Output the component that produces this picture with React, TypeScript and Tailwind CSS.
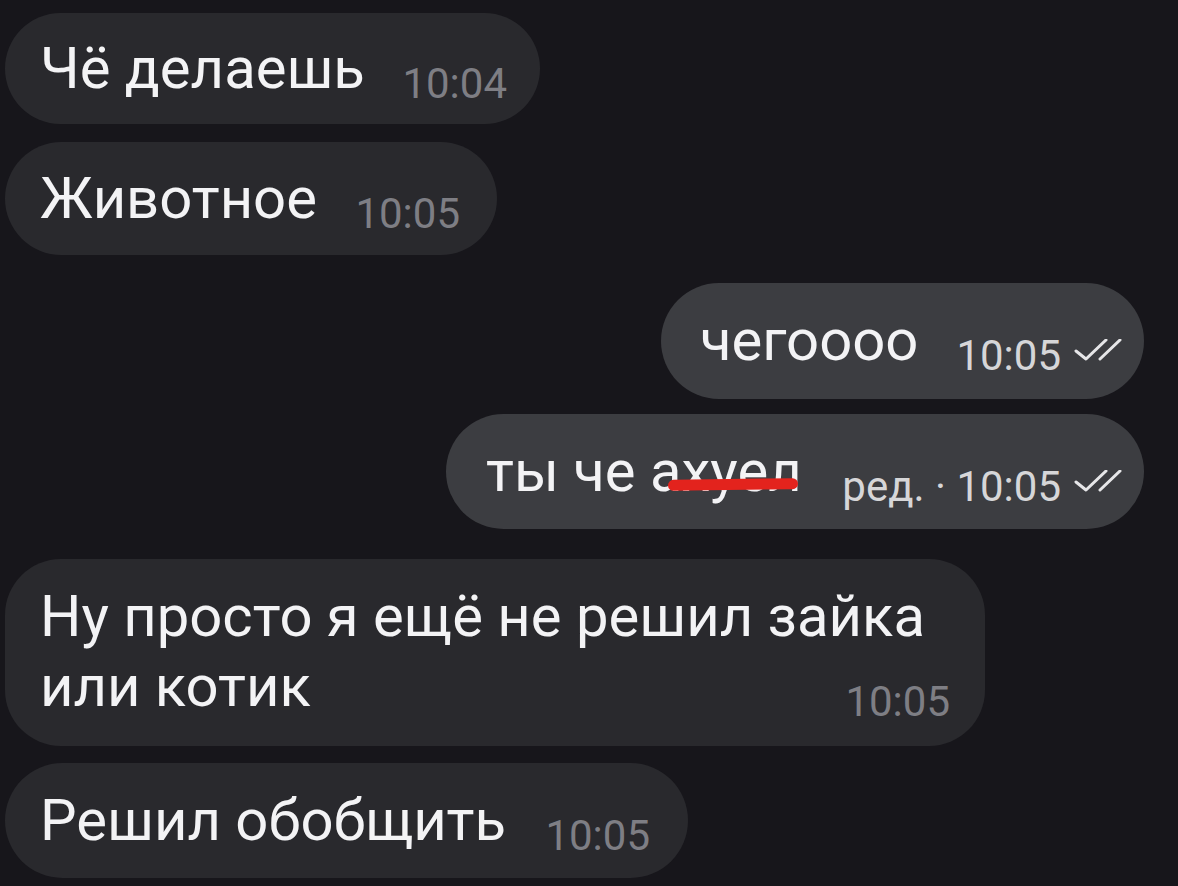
import React from "react";

function Checks() {
  return (
    <svg
      width="48"
      height="24"
      viewBox="0 0 48 24"
      fill="none"
      stroke="#e6e6e8"
      strokeWidth="3"
      strokeLinecap="round"
      strokeLinejoin="round"
      className="ml-[13px] shrink-0 translate-y-[3px]"
    >
      <path d="M2 12 L12 20 L32 1" />
      <path d="M26 20 L46 1" />
    </svg>
  );
}

function InTime({ t }: { t: string }) {
  return (
    <span className="translate-y-[10px] text-[42px] leading-none text-[#7e7e84]">
      {t}
    </span>
  );
}

export default function App() {
  return (
    <div className="flex h-[886px] w-full flex-col overflow-hidden whitespace-nowrap bg-[#17161b] pt-[13px] font-['Roboto','Liberation_Sans',sans-serif] text-[58px] leading-[70px] text-[#f3f3f5]">
      {/* Чё делаешь */}
      <div className="ml-[5px] flex w-[535px] items-baseline justify-between rounded-full bg-[#29292d] pb-[21px] pl-[35px] pr-[33px] pt-[20px]">
        <span>Чё делаешь</span>
        <InTime t="10:04" />
      </div>

      {/* Животное */}
      <div className="ml-[5px] mt-[18px] flex w-[492px] items-baseline justify-between rounded-full bg-[#29292d] pb-[22px] pl-[35px] pr-[37px] pt-[21px]">
        <span>Животное</span>
        <InTime t="10:05" />
      </div>

      {/* чегоооо */}
      <div className="mr-[34px] mt-[28px] flex w-[483px] items-baseline self-end rounded-full bg-[#3c3d41] pb-[24px] pl-[39px] pr-[22px] pt-[22px]">
        <span>чегоооо</span>
        <span className="ml-auto translate-y-[10px] text-[42px] leading-none text-[#d6d6d8]">
          10:05
        </span>
        <Checks />
      </div>

      {/* ты че ахуел */}
      <div className="mr-[34px] mt-[15px] flex w-[698px] items-baseline self-end rounded-full bg-[#3c3d41] pb-[23px] pl-[40px] pr-[22px] pt-[22px]">
        <span>
          ты че{" "}
          <span className="relative">
            ахуел
            <span className="absolute left-[18px] right-[4px] top-[42px] h-[11px] -rotate-[0.8deg] rounded-full bg-[#e3231d]" />
          </span>
        </span>
        <span className="ml-auto translate-y-[10px] text-[42px] leading-none text-[#d6d6d8]">
          ред. · 10:05
        </span>
        <Checks />
      </div>

      {/* Ну просто ... */}
      <div className="ml-[5px] mt-[30px] flex w-[980px] flex-col rounded-[56px] bg-[#29292d] pb-[25px] pl-[35px] pr-[35px] pt-[22px]">
        <span>Ну просто я ещё не решил зайка</span>
        <div className="flex items-baseline justify-between">
          <span>или котик</span>
          <InTime t="10:05" />
        </div>
      </div>

      {/* Решил обобщить */}
      <div className="ml-[5px] mt-[17px] flex w-[683px] items-baseline justify-between rounded-full bg-[#29292d] pb-[23px] pl-[35px] pr-[38px] pt-[22px]">
        <span>Решил обобщить</span>
        <InTime t="10:05" />
      </div>
    </div>
  );
}
